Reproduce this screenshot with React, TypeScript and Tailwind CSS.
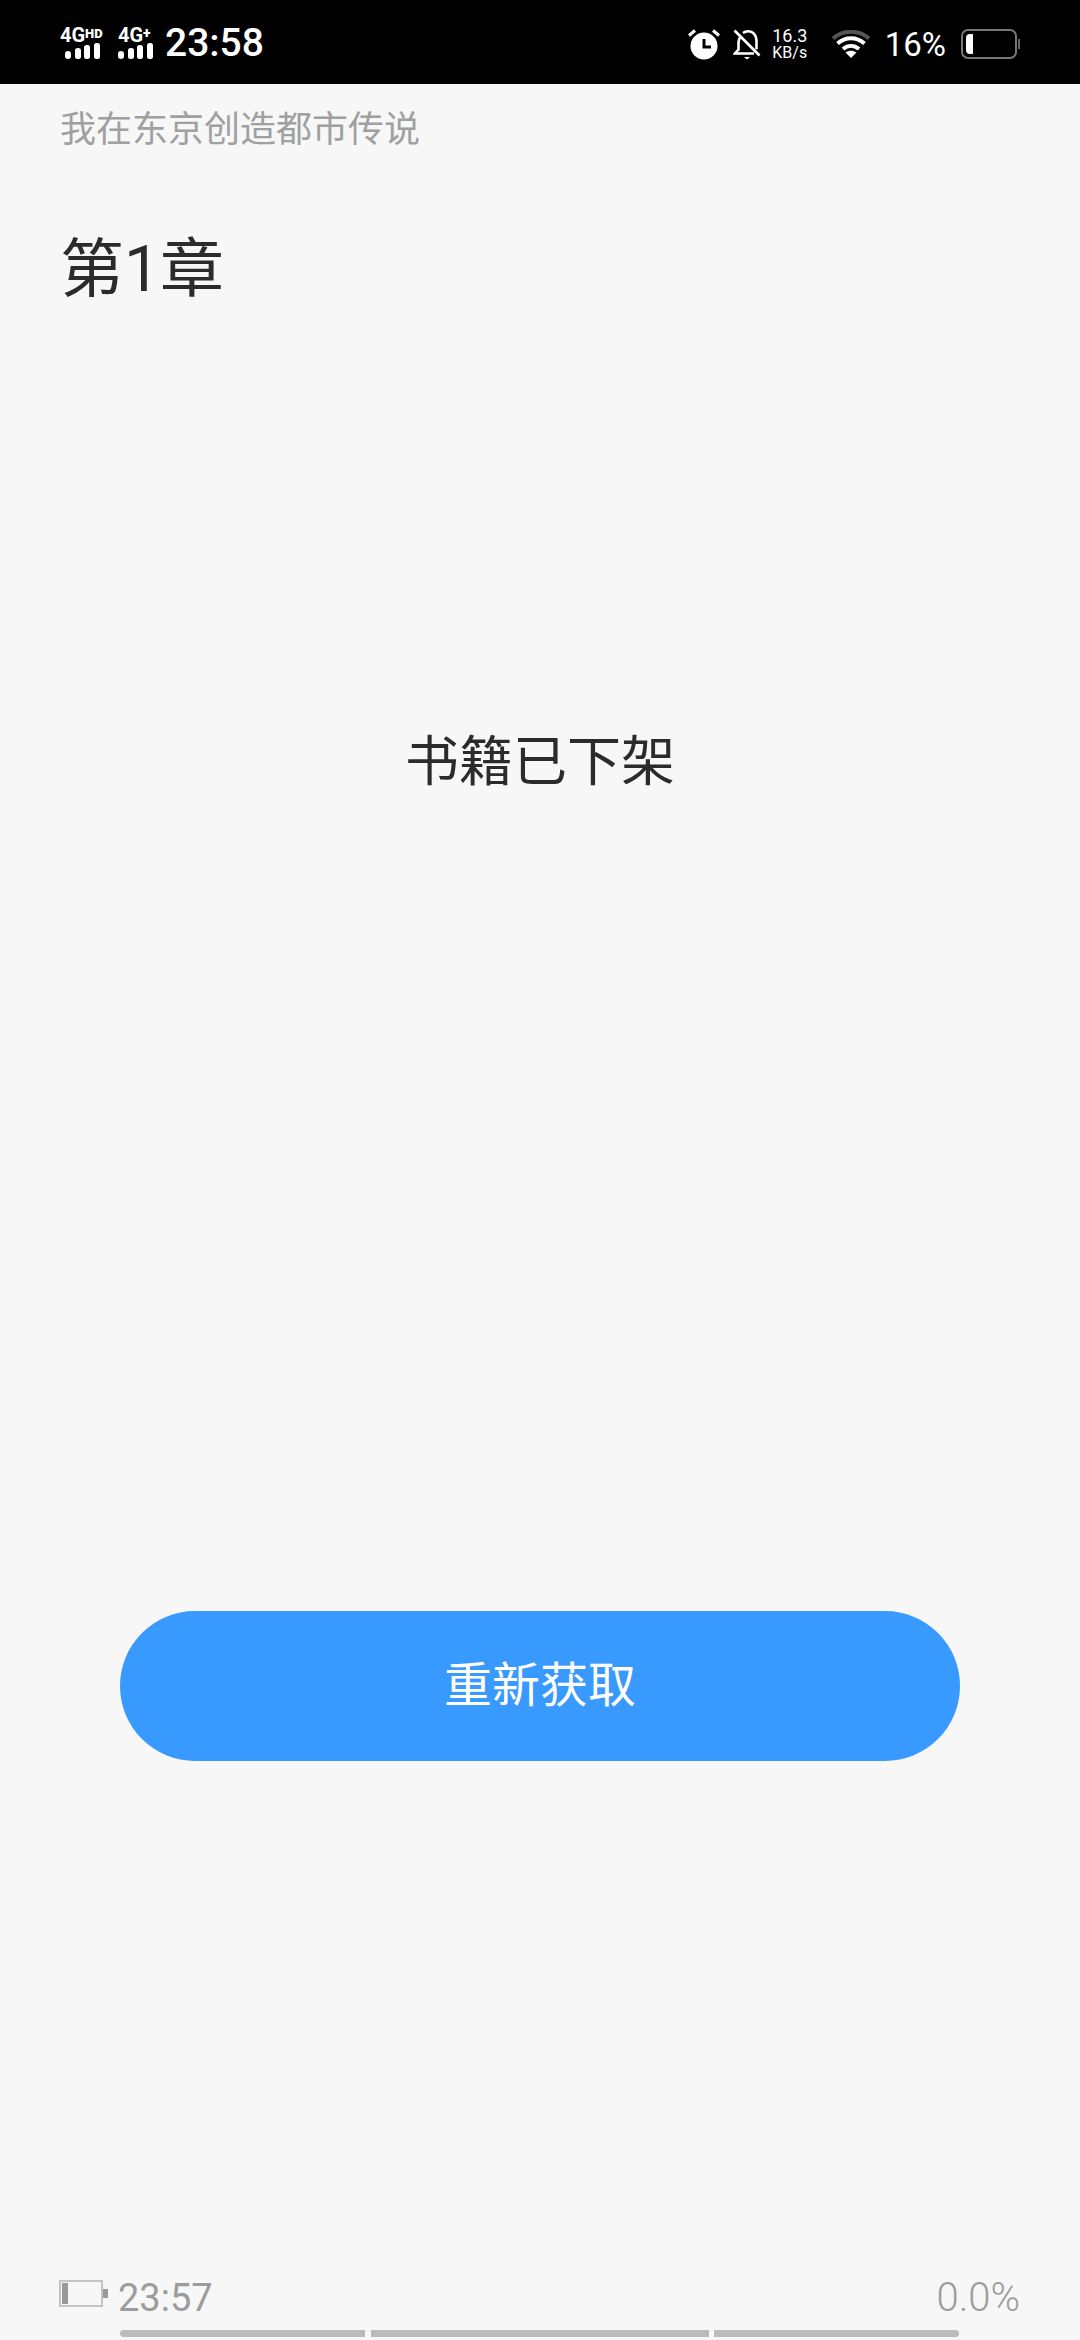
import React from "react";

const cjk = "font-['Roboto','Noto_Sans_CJK_SC',sans-serif]";

function Signal({ className = "" }: { className?: string }) {
  return (
    <svg width="35" height="16" viewBox="0 0 35 16" className={className} fill="#fff">
      <rect x="0" y="8" width="6" height="8" rx="3" />
      <rect x="10" y="5" width="6" height="11" rx="2.500" />
      <rect x="19" y="2" width="6" height="14" rx="2.500" />
      <rect x="29" y="0" width="6" height="16" rx="2.500" />
    </svg>
  );
}

function Alarm() {
  return (
    <svg width="32" height="32" viewBox="0 0 32 32">
      <circle cx="16" cy="18" r="13.500" fill="#fff" />
      <path d="M16 11v8h7" fill="none" stroke="#000" strokeWidth="3" />
      <path d="M1 7.500 7 2.500M31 7.500 25 2.500" stroke="#fff" strokeWidth="3" fill="none" />
    </svg>
  );
}

function BellOff() {
  return (
    <svg width="28" height="32" viewBox="0 0 28 32" fill="none" stroke="#fff" strokeWidth="2.600">
      <path d="M7 9.500c-1 1.500-1.500 3-1.500 5v7l-3.500 4h19" />
      <path d="M10 5c1.500-1.200 3-1.800 5-1.800 5 0 8.500 4 8.500 9v9" />
      <path d="M1.500 2.500 26.500 27.500" />
      <path d="M11 29h6l-3 2.500z" fill="#fff" stroke="none" />
    </svg>
  );
}

function Wifi() {
  return (
    <svg width="38" height="28" viewBox="0 0 38 28" fill="none">
      <path d="M1 8.500C11-.5 27-.5 37 8.500" stroke="#555" strokeWidth="4" />
      <path d="M5.500 13.500c8-7 19-7 27 0" stroke="#fff" strokeWidth="4" />
      <path d="M11 19c5-4 11-4 16 0" stroke="#fff" strokeWidth="4" />
      <path d="M13.500 22.500c3.500-2.500 7.500-2.500 11 0L19 28z" fill="#fff" />
    </svg>
  );
}

function StatusBattery() {
  return (
    <div className="flex items-center">
      <div className="flex h-[30px] w-[56px] items-center rounded-[7px] border-2 border-[#777] p-[3px]">
        <div className="h-[20px] w-[7px] rounded-l-[4px] bg-white" />
      </div>
      <div className="ml-[1px] h-[10px] w-[2px] bg-[#666]" />
    </div>
  );
}

function ReaderBattery() {
  return (
    <div className="mb-[7px] flex items-center">
      <div className="flex h-[27px] w-[44px] items-stretch border-2 border-[#c4c4c4] p-[1px]">
        <div className="w-[6px] bg-[#999]" />
      </div>
      <div className="h-[9px] w-[5px] bg-[#999]" />
    </div>
  );
}

export default function App() {
  return (
    <div className={`flex h-[2340px] w-[1080px] flex-col overflow-hidden bg-[#f7f7f7] ${cjk}`}>
      <header className="flex h-[84px] shrink-0 items-center justify-between bg-black px-[60px] pt-[2px] font-['Roboto',sans-serif] text-white">
        <div className="flex items-center">
          <div className="flex w-[46px] flex-col">
            <div className="flex h-[15px] items-start whitespace-nowrap text-[20px] leading-[15px] font-bold">
              4G<span className="text-[13px] leading-[11px] font-black">HD</span>
            </div>
            <Signal className="ml-[5px]" />
          </div>
          <div className="ml-[12px] flex w-[35px] flex-col">
            <div className="flex h-[15px] items-start whitespace-nowrap text-[20px] leading-[15px] font-bold">
              4G<span className="text-[14px] leading-[11px] font-black">+</span>
            </div>
            <Signal />
          </div>
          <span className="ml-[12px] text-[39px] leading-none font-medium">23:58</span>
        </div>
        <div className="mt-[2px] flex items-center">
          <Alarm />
          <div className="ml-[13px]"><BellOff /></div>
          <div className="ml-[11px] flex w-[36px] flex-col items-center leading-[17px]">
            <span className="text-[18px]">16.3</span>
            <span className="whitespace-nowrap text-[16px]">KB/s</span>
          </div>
          <div className="ml-[24px]"><Wifi /></div>
          <span className="ml-[15px] text-[33px] leading-none">16%</span>
          <div className="ml-[15px]"><StatusBattery /></div>
        </div>
      </header>

      <main className="flex flex-1 flex-col">
        <div className="ml-[60px] mt-[26px] h-[40px] text-[36px] leading-[40px] text-[#a0a0a0]">我在东京创造都市传说</div>
        <h1 className="ml-[60px] mt-[82px] h-[76px] text-[64px] leading-[76px] font-normal text-[#2b2b2b]">第1章</h1>
        <div className="mt-[423px] h-[64px] text-center text-[54px] leading-[64px] text-[#2b2b2b]">书籍已下架</div>
        <button className="mt-[816px] flex h-[150px] w-[840px] items-center justify-center self-center rounded-[75px] bg-[#3899ff] text-[48px] text-white">
          重新获取
        </button>
      </main>

      <footer className="shrink-0 pl-[59px] pr-[60px]">
        <div className="flex items-center justify-between">
          <div className="flex items-center">
            <ReaderBattery />
            <span className="ml-[10px] mt-[2px] text-[38px] leading-[44px] text-[#9c9c9c]">23:57</span>
          </div>
          <span className="mt-[2px] text-[40px] leading-[44px] font-light text-[#9c9c9c]">0.0%</span>
        </div>
        <div className="mb-[3px] ml-[61px] mt-[10px] flex h-[7px] w-[839px]">
          <div className="w-[245px] rounded-l-full bg-[#bbbbbb]" />
          <div className="ml-[6px] w-[338px] bg-[#bbbbbb]" />
          <div className="ml-[5px] w-[245px] rounded-r-full bg-[#bbbbbb]" />
        </div>
      </footer>
    </div>
  );
}
